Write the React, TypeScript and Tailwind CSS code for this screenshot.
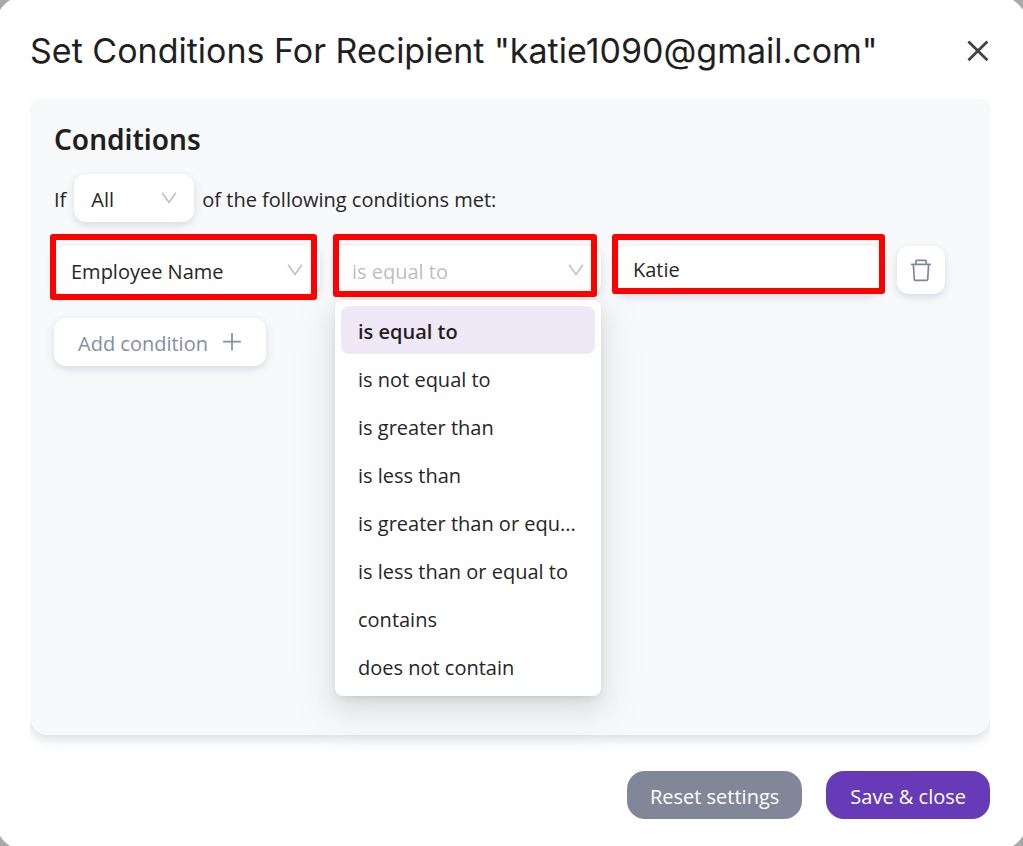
import { useState } from 'react'
import type { ReactNode, SelectHTMLAttributes } from 'react'
import { clsx } from 'clsx'

const operators = [
    'is equal to',
    'is not equal to',
    'is greater than',
    'is less than',
    'is greater than or equ...',
    'is less than or equal to',
    'contains',
    'does not contain',
]

const ChevronIcon = () => (
    <svg
        viewBox="0 0 16 12"
        aria-hidden="true"
        className="pointer-events-none absolute top-[18px] right-[17px] h-3 w-4 text-[#bfbfbf]"
    >
        <path d="M1.1.8 8 10.4 14.9.8" fill="none" stroke="currentColor" strokeWidth="1.5" />
    </svg>
)

const TrashIcon = () => (
    <svg viewBox="0 0 24 24" aria-hidden="true" className="h-6 w-6" fill="none" stroke="currentColor" strokeWidth="1.7">
        <path d="M2 6.4h20" />
        <path d="M6.9 6.2V3.2q0-.8.8-.8h8.6q.8 0 .8.8v3" />
        <path d="M4.4 6.6l.9 14.9q.1.9 1 .9h11.4q.9 0 1-.9l.9-14.9" />
    </svg>
)

interface SelectProps extends SelectHTMLAttributes<HTMLSelectElement> {
    children: ReactNode
}

const Select = ({ className, children, ...props }: SelectProps) => (
    <div className="relative">
        <select
            className={clsx(
                'h-12 w-full appearance-none rounded-xl bg-white pt-1 pr-10 pl-[17px] shadow-[0_3px_9px_rgba(40,60,90,0.16)] outline-none',
                className
            )}
            {...props}
        >
            {children}
        </select>
        <ChevronIcon />
    </div>
)

const Highlight = ({ className }: { className: string }) => (
    <span className={clsx('pointer-events-none absolute rounded-[3px] border-[6px] border-[#ff0000]', className)} />
)

const App = () => {
    const [operator, setOperator] = useState('is equal to')
    const [value, setValue] = useState('Katie')

    return (
        <div className="overflow-hidden bg-[#a9a9a9]">
            <div
                role="dialog"
                aria-labelledby="dialog-title"
                className="-m-1.5 rounded-[36px] bg-white pt-9 pr-[39px] pb-[33px] pl-9 font-['Open_Sans',sans-serif] text-[20px] leading-8 text-[#262626]"
            >
                {/* Header */}
                <div className="flex h-[69px] items-start justify-between">
                    <h1
                        id="dialog-title"
                        className="font-['Inter',sans-serif] text-[34px] leading-[42px] font-normal whitespace-nowrap text-[#1f1f1f]"
                    >
                        Set Conditions For Recipient "katie1090@gmail.com"
                    </h1>
                    <button type="button" aria-label="Close" className="mt-2 flex h-6 w-6 items-center justify-center">
                        <svg viewBox="0 0 24 24" className="h-6 w-6" aria-hidden="true">
                            <path d="M2.4 3.4l19 18.8M21.4 3.4l-19 18.8" stroke="#434343" strokeWidth="2.8" />
                        </svg>
                    </button>
                </div>

                {/* Conditions */}
                <div className="[clip-path:inset(0_0_-24px_0)]">
                    <section className="min-h-[636px] rounded-[18px] bg-[#f8f9fb] px-6 pt-5 shadow-[0_4px_12px_rgba(40,60,80,0.18)]">
                        <h2 className="font-['Noto_Sans',sans-serif] text-[28px] leading-10 font-semibold text-[#1f1f1f]">
                            Conditions
                        </h2>

                        <div className="mt-[15px] flex items-center gap-2">
                            <label htmlFor="match" className="pt-1">If</label>
                            <div className="w-[120px]">
                                <Select id="match">
                                    <option>All</option>
                                    <option>Any</option>
                                </Select>
                            </div>
                            <span className="pt-1">of the following conditions met:</span>
                        </div>

                        <div className="mt-6 flex gap-[15px] pr-[21px]">
                            <div className="relative flex-1">
                                <Select aria-label="Field">
                                    <option>Employee Name</option>
                                </Select>
                                <Highlight className="-top-3 right-[3px] -bottom-1.5 -left-1" />
                            </div>

                            <div className="relative flex-1">
                                <Select
                                    aria-label="Operator"
                                    className="text-[#bfbfbf]"
                                    value={operator}
                                    onChange={(e) => setOperator(e.target.value)}
                                >
                                    {operators.map((name) => (
                                        <option key={name}>{name}</option>
                                    ))}
                                </Select>
                                <ul
                                    role="listbox"
                                    aria-label="Operators"
                                    className="absolute inset-x-0 top-[54px] rounded-lg bg-white p-1.5 shadow-[0_9px_24px_rgba(0,0,0,0.09),0_4px_9px_-4px_rgba(0,0,0,0.12),0_14px_42px_12px_rgba(0,0,0,0.05)]"
                                >
                                    {operators.map((name) => (
                                        <li
                                            key={name}
                                            role="option"
                                            aria-selected={name === operator}
                                            onClick={() => setOperator(name)}
                                            className={clsx(
                                                'h-12 cursor-pointer rounded-lg pl-[17px] leading-[52px] whitespace-nowrap',
                                                name === operator && 'bg-[#efe8f7] font-semibold text-[#1f1f1f]'
                                            )}
                                        >
                                            {name}
                                        </li>
                                    ))}
                                </ul>
                                <Highlight className="-top-3 right-1 -bottom-[3px] -left-0.5" />
                            </div>

                            <div className="relative flex-1">
                                <input
                                    type="text"
                                    aria-label="Value"
                                    value={value}
                                    onChange={(e) => setValue(e.target.value)}
                                    className="h-12 w-full rounded-xl bg-white px-[17px] pb-0.5 shadow-[0_3px_9px_rgba(40,60,90,0.16)] outline-none"
                                />
                                <Highlight className="-top-3 -right-[3px] bottom-0 -left-1" />
                            </div>

                            <button
                                type="button"
                                aria-label="Delete condition"
                                className="flex h-12 w-12 items-center justify-center rounded-xl bg-white text-[#80869b] shadow-[0_3px_9px_rgba(40,60,90,0.16)]"
                            >
                                <TrashIcon />
                            </button>
                        </div>

                        <button
                            type="button"
                            className="mt-6 flex h-12 items-center gap-[14px] rounded-xl bg-white px-6 text-[#878da3] shadow-[0_3px_9px_rgba(40,60,90,0.16)]"
                        >
                            <span className="pt-1">Add condition</span>
                            <svg viewBox="0 0 20 20" className="h-5 w-5" aria-hidden="true">
                                <path d="M10 1v17.5M1.2 9.7h17.6" stroke="currentColor" strokeWidth="1.7" />
                            </svg>
                        </button>
                    </section>
                </div>

                {/* Footer */}
                <div className="mt-9 flex justify-end gap-6 text-white">
                    <button type="button" className="h-12 rounded-[18px] bg-[#818699] px-[23px] pt-1">
                        Reset settings
                    </button>
                    <button type="button" className="h-12 rounded-[18px] bg-[#673ab7] px-6 pt-1">
                        Save &amp; close
                    </button>
                </div>
            </div>
        </div>
    )
}

export default App
